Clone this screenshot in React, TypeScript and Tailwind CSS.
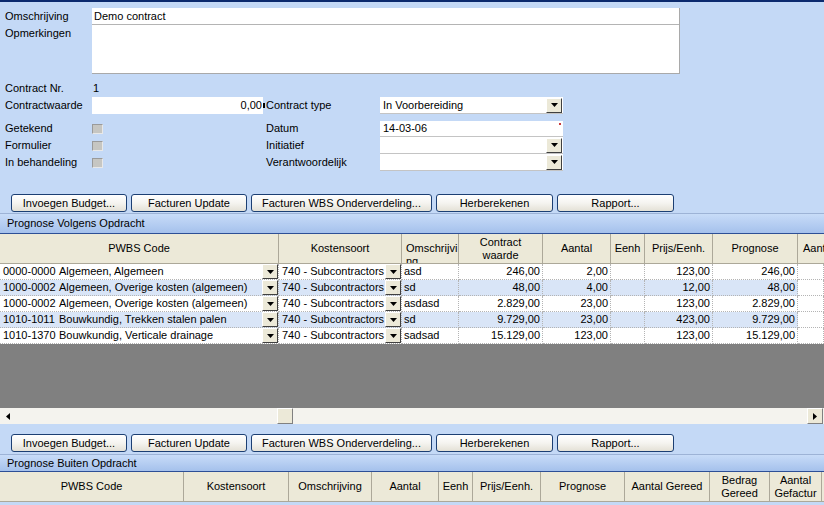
import React from "react";

const DropBtn = ({ h = "h-[15px]" }: { h?: string }) => (
  <div
    className={`flex ${h} w-[16px] shrink-0 items-center justify-center border border-t-white border-l-white border-b-[#404040] border-r-[#404040] bg-[#ece9d8]`}
  >
    <svg width="7" height="4" viewBox="0 0 7 4">
      <path d="M0 0h7L3.5 4z" fill="#000" />
    </svg>
  </div>
);

const Select = ({ value = "" }: { value?: string }) => (
  <div className="flex h-[17px] w-[183px] items-center border-b border-[#c4c4c4] bg-white">
    <span className="flex-1 pl-[3px]">{value}</span>
    <div className="mr-[1px]">
      <DropBtn />
    </div>
  </div>
);

const Check = () => (
  <div className="h-[10px] w-[11px] border border-t-[#9a9a9a] border-l-[#9a9a9a] border-b-[#e8e8e8] border-r-[#e8e8e8] bg-[#c6c6c2]" />
);

const XpButton = ({ label, w }: { label: string; w: string }) => (
  <div
    className={`flex h-[18px] ${w} items-center justify-center overflow-hidden whitespace-nowrap rounded-[3px] border border-[#1c3f73] bg-gradient-to-b from-white via-[#f5f4f0] to-[#e4e1d6]`}
  >
    {label}
  </div>
);

const ButtonRow = ({ className = "" }: { className?: string }) => (
  <div className={`flex gap-[4px] pl-[11px] ${className}`}>
    <XpButton label="Invoegen Budget..." w="w-[116px]" />
    <XpButton label="Facturen Update" w="w-[116px]" />
    <XpButton label="Facturen WBS Onderverdeling..." w="w-[181px]" />
    <XpButton label="Herberekenen" w="w-[117px]" />
    <XpButton label="Rapport..." w="w-[117px]" />
  </div>
);

const rows = [
  { code: "0000-0000", desc: "Algemeen, Algemeen", o: "asd", cw: "246,00", a: "2,00", p: "123,00", pr: "246,00" },
  { code: "1000-0002", desc: "Algemeen, Overige kosten (algemeen)", o: "sd", cw: "48,00", a: "4,00", p: "12,00", pr: "48,00" },
  { code: "1000-0002", desc: "Algemeen, Overige kosten (algemeen)", o: "asdasd", cw: "2.829,00", a: "23,00", p: "123,00", pr: "2.829,00" },
  { code: "1010-1011", desc: "Bouwkundig, Trekken stalen palen", o: "sd", cw: "9.729,00", a: "23,00", p: "423,00", pr: "9.729,00" },
  { code: "1010-1370", desc: "Bouwkundig, Verticale drainage", o: "sadsad", cw: "15.129,00", a: "123,00", p: "123,00", pr: "15.129,00" },
];

const hCell = "flex items-center justify-center text-center border-r border-[#aca899] overflow-hidden leading-[13px]";
const dCell = "flex h-[16px] items-center border-r border-b border-dotted border-[#b4b4b4] overflow-hidden whitespace-nowrap";

export default function App() {
  return (
    <div className="h-[505px] w-[824px] overflow-hidden bg-[#c4d9f6] font-['Liberation_Sans',Arial,sans-serif] text-[11px] leading-none text-black">
      <div className="h-[2px] bg-[#0c2a6e]" />

      {/* Omschrijving / Opmerkingen */}
      <div className="mt-[6px] flex">
        <div className="w-[92px] pl-[5px]">
          <div className="flex h-[17px] items-center">Omschrijving</div>
          <div className="flex h-[17px] items-center">Opmerkingen</div>
        </div>
        <div className="w-[588px] border-r border-b border-[#a9a9a9] bg-white">
          <div className="flex h-[17px] items-center border-b border-[#b4b4b4] pl-[2px]">Demo contract</div>
          <div className="h-[48px]" />
        </div>
      </div>

      {/* Contract Nr */}
      <div className="mt-[6px] flex h-[17px] items-center">
        <div className="w-[92px] pl-[5px]">Contract Nr.</div>
        <div className="pl-[1px]">1</div>
      </div>

      {/* Contractwaarde / Contract type */}
      <div className="flex h-[17px] items-center">
        <div className="w-[92px] pl-[5px]">Contractwaarde</div>
        <div className="flex h-[17px] w-[171px] items-center justify-end bg-white pr-[1px]">0,00</div>
        <div className="flex w-[3px] items-center">
          <div className="h-[5px] w-[2px] bg-black" />
        </div>
        <div className="w-[114px]">Contract type</div>
        <Select value="In Voorbereiding" />
      </div>

      {/* checkbox rows */}
      <div className="mt-[6px] flex flex-col">
        <div className="flex h-[17px] items-center">
          <div className="w-[92px] pl-[5px]">Getekend</div>
          <div className="w-[174px]"><Check /></div>
          <div className="w-[114px]">Datum</div>
          <div className="relative flex h-[16px] w-[183px] items-center border-b border-[#c4c4c4] bg-white pl-[3px]">
            14-03-06
            <div className="absolute right-[2px] top-[2px] h-[2px] w-[2px] bg-[#c8383c]" />
          </div>
        </div>
        <div className="flex h-[17px] items-center">
          <div className="w-[92px] pl-[5px]">Formulier</div>
          <div className="w-[174px]"><Check /></div>
          <div className="w-[114px]">Initiatief</div>
          <Select />
        </div>
        <div className="flex h-[17px] items-center">
          <div className="w-[92px] pl-[5px]">In behandeling</div>
          <div className="w-[174px]"><Check /></div>
          <div className="w-[114px]">Verantwoordelijk</div>
          <Select />
        </div>
      </div>

      <ButtonRow className="mt-[23px]" />

      {/* Prognose Volgens Opdracht */}
      <div className="mt-[1px] flex h-[21px] items-center border-t border-b border-t-[#9db3d6] border-b-[#2d4f96] bg-gradient-to-b from-[#c8dcf8] to-[#a5c1ec] pl-[7px]">
        Prognose Volgens Opdracht
      </div>

      <div className="grid grid-cols-[279px_123px_57px_84px_68px_34px_68px_85px_1fr]">
        <div className={`${hCell} h-[30px] border-b bg-[#ece9d8]`}>PWBS Code</div>
        <div className={`${hCell} h-[30px] border-b bg-[#ece9d8]`}>Kostensoort</div>
        <div className="h-[30px] overflow-hidden whitespace-nowrap border-r border-b border-[#aca899] bg-[#ece9d8] pl-[4px] pt-[8px] leading-[13px]">
          Omschrijvi
          <br />
          ng
        </div>
        <div className={`${hCell} h-[30px] border-b bg-[#ece9d8]`}>
          Contract
          <br />
          waarde
        </div>
        <div className={`${hCell} h-[30px] border-b bg-[#ece9d8]`}>Aantal</div>
        <div className={`${hCell} h-[30px] border-b bg-[#ece9d8]`}>Eenh</div>
        <div className={`${hCell} h-[30px] border-b bg-[#ece9d8]`}>Prijs/Eenh.</div>
        <div className={`${hCell} h-[30px] border-b bg-[#ece9d8]`}>Prognose</div>
        <div className="flex h-[30px] items-center overflow-hidden whitespace-nowrap border-b border-[#aca899] bg-[#ece9d8] pl-[5px]">
          Aantal
        </div>

        {rows.map((r, i) => {
          const bg = i % 2 === 1 ? "bg-[#d9e5f7]" : "bg-white";
          return (
            <React.Fragment key={i}>
              <div className={`${dCell} ${bg} justify-between`}>
                <div className="flex items-center">
                  <span className="w-[59px] pl-[3px]">{r.code}</span>
                  <span>{r.desc}</span>
                </div>
                <DropBtn />
              </div>
              <div className={`${dCell} ${bg} justify-between`}>
                <span className="pl-[3px]">740 - Subcontractors</span>
                <DropBtn />
              </div>
              <div className={`${dCell} ${bg} pl-[2px]`}>{r.o}</div>
              <div className={`${dCell} ${bg} justify-end pr-[2px]`}>{r.cw}</div>
              <div className={`${dCell} ${bg} justify-end pr-[2px]`}>{r.a}</div>
              <div className={`${dCell} ${bg}`} />
              <div className={`${dCell} ${bg} justify-end pr-[2px]`}>{r.p}</div>
              <div className={`${dCell} ${bg} justify-end pr-[2px]`}>{r.pr}</div>
              <div className={`${dCell} bg-white`} />
            </React.Fragment>
          );
        })}
      </div>

      <div className="h-[64px] bg-[#808080]" />

      {/* horizontal scrollbar */}
      <div className="flex h-[16px] bg-[#f4f3ee]">
        <div className="flex w-[16px] items-center justify-center">
          <svg width="4" height="7" viewBox="0 0 4 7">
            <path d="M4 0v7L0 3.5z" fill="#000" />
          </svg>
        </div>
        <div className="ml-[261px] h-[16px] w-[16px] border border-t-white border-l-white border-b-[#808080] border-r-[#808080] bg-[#ece9d8]" />
        <div className="flex-1" />
        <div className="mr-[1px] flex w-[16px] items-center justify-center border border-t-white border-l-white border-b-[#808080] border-r-[#808080] bg-[#ece9d8]">
          <svg width="4" height="7" viewBox="0 0 4 7">
            <path d="M0 0v7L4 3.5z" fill="#000" />
          </svg>
        </div>
      </div>

      <ButtonRow className="mt-[10px]" />

      {/* Prognose Buiten Opdracht */}
      <div className="mt-[2px] flex h-[18px] items-center border-t border-b border-t-[#9db3d6] border-b-[#2d4f96] bg-gradient-to-b from-[#c8dcf8] to-[#a5c1ec] pl-[7px]">
        Prognose Buiten Opdracht
      </div>

      <div className="grid grid-cols-[184px_105px_83px_67px_34px_68px_84px_85px_60px_52px_1fr] bg-white">
        <div className={`${hCell} h-[30px] border-b bg-[#ece9d8]`}>PWBS Code</div>
        <div className={`${hCell} h-[30px] border-b bg-[#ece9d8]`}>Kostensoort</div>
        <div className={`${hCell} h-[30px] border-b bg-[#ece9d8]`}>Omschrijving</div>
        <div className={`${hCell} h-[30px] border-b bg-[#ece9d8]`}>Aantal</div>
        <div className={`${hCell} h-[30px] border-b bg-[#ece9d8]`}>Eenh</div>
        <div className={`${hCell} h-[30px] border-b bg-[#ece9d8]`}>Prijs/Eenh.</div>
        <div className={`${hCell} h-[30px] border-b bg-[#ece9d8]`}>Prognose</div>
        <div className={`${hCell} h-[30px] border-b bg-[#ece9d8]`}>Aantal Gereed</div>
        <div className={`${hCell} h-[30px] border-b bg-[#ece9d8]`}>
          Bedrag
          <br />
          Gereed
        </div>
        <div className={`${hCell} h-[30px] border-b bg-[#ece9d8]`}>
          Aantal
          <br />
          Gefactur
        </div>
        <div className="h-[30px] border-b border-[#aca899] bg-[#ece9d8]" />
      </div>
    </div>
  );
}
